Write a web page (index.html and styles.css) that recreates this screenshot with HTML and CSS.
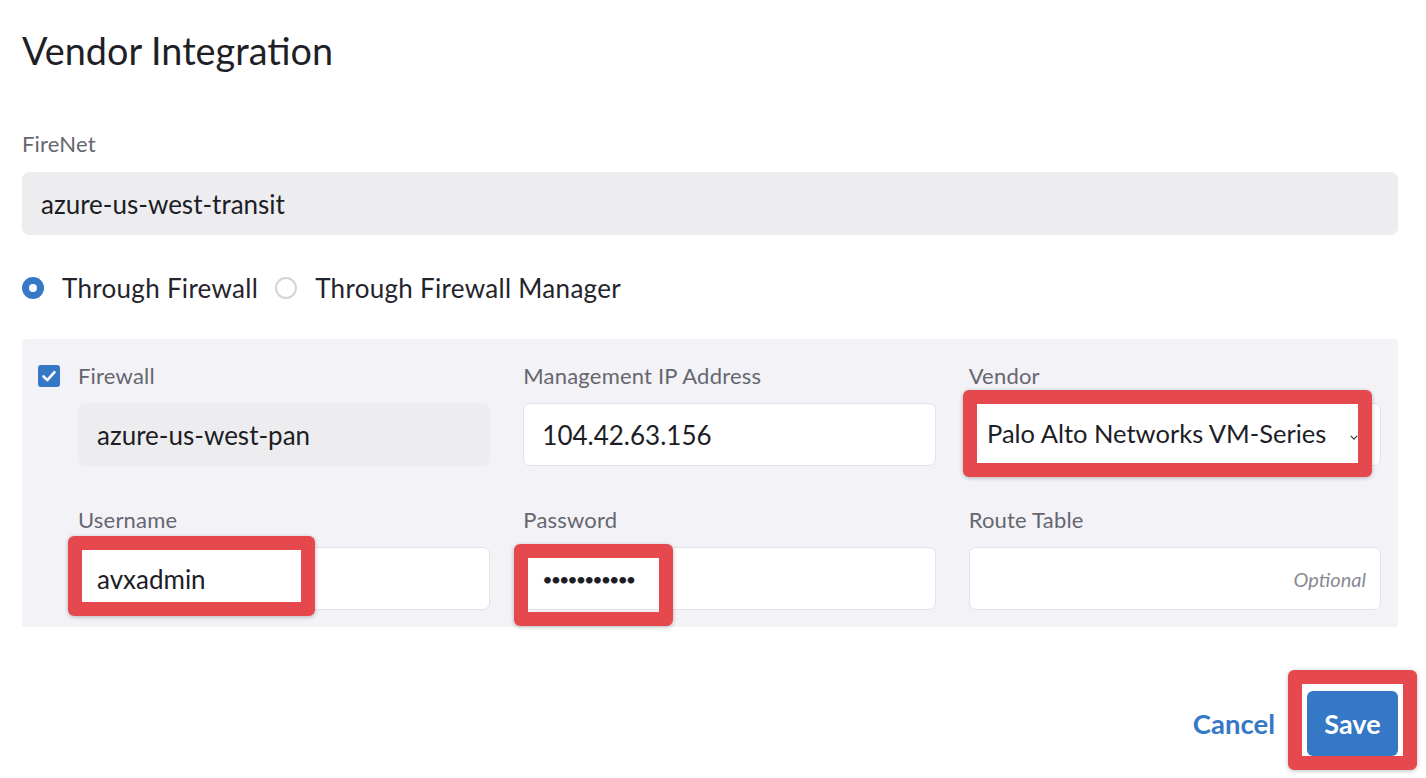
FILE: index.html
```html
<!DOCTYPE html>
<html>
<head>
<meta charset="utf-8">
<link rel="stylesheet" href="styles.css">
</head>
<body>
<div class="page">
  <h1 class="title">Vendor Integration</h1>

  <div class="field">
    <div class="label">FireNet</div>
    <div class="input disabled">azure-us-west-transit</div>
  </div>

  <div class="radios">
    <div class="radio-item"><span class="radio on"></span><span>Through Firewall</span></div>
    <div class="radio-item"><span class="radio"></span><span>Through Firewall Manager</span></div>
  </div>

  <div class="panel">
    <div class="cell">
      <div class="label check-label">
        <span class="checkbox"><svg viewBox="0 0 22 22" width="22" height="22"><path d="M5.5 11.5l3.8 3.6 7.2-8" fill="none" stroke="#fff" stroke-width="2.6" stroke-linecap="round" stroke-linejoin="round"/></svg></span>
        Firewall
      </div>
      <div class="input disabled">azure-us-west-pan</div>
    </div>
    <div class="cell">
      <div class="label">Management IP Address</div>
      <div class="input">104.42.63.156</div>
    </div>
    <div class="cell">
      <div class="label">Vendor</div>
      <div class="input select">Palo Alto Networks VM-Series<svg class="chev" viewBox="0 0 10 6" width="10" height="6"><path d="M1 1l4 4 4-4" fill="none" stroke="#333" stroke-width="1.4"/></svg></div>
    </div>
    <div class="cell">
      <div class="label">Username</div>
      <div class="input">avxadmin</div>
    </div>
    <div class="cell">
      <div class="label">Password</div>
      <div class="input pwd">•••••••••••</div>
    </div>
    <div class="cell">
      <div class="label">Route Table</div>
      <div class="input optional"><span class="ph">Optional</span></div>
    </div>
  </div>

  <div class="actions">
    <span class="cancel">Cancel</span>
    <span class="save">Save</span>
  </div>

  <div class="mark mark-vendor"><svg class="mark-chev" viewBox="0 0 10 6" width="8" height="5"><path d="M1 1l4 4 4-4" fill="none" stroke="#333" stroke-width="1.4"/></svg></div>
  <div class="mark mark-user"></div>
  <div class="mark mark-pwd"></div>
  <div class="mark mark-save"></div>
</div>
</body>
</html>
```

FILE: styles.css
```css
html, body {
  margin: 0;
  padding: 0;
  background: #fff;
}
body {
  font-family: Lato, "Noto Sans", sans-serif;
  color: #1d1d26;
}
.page {
  position: relative;
  width: 1376px;
  padding: 0 28px 0 22px;
  height: 778px;
  overflow: hidden;
}
.title {
  margin: 0;
  padding-top: 29px;
  font-size: 37.8px;
  line-height: 44px;
  font-weight: 400;
  color: #1f1f28;
  letter-spacing: 0;
}
.label {
  font-size: 22px;
  line-height: 24px;
  color: #66666f;
  letter-spacing: 0.2px;
}
.field {
  margin-top: 59px;
}
.field .label {
  margin-bottom: 16px;
}
.input {
  box-sizing: border-box;
  height: 63px;
  border-radius: 7px;
  background: #fff;
  border: 1px solid #e2e2e8;
  display: flex;
  align-items: center;
  padding: 0 18px;
  font-size: 26px;
  color: #1d1d26;
}
.input.disabled {
  background: #ededf0;
  border-color: #ededf0;
}
.radios {
  display: flex;
  align-items: center;
  gap: 17px;
  margin-top: 38px;
  height: 30px;
  font-size: 26px;
  letter-spacing: 0.3px;
  color: #24242c;
}
.radio-item {
  display: flex;
  align-items: center;
  gap: 18px;
}
.radio {
  box-sizing: border-box;
  width: 22px;
  height: 22px;
  border-radius: 50%;
  border: 2px solid #d3d3da;
  background: #fff;
  flex: none;
}
.radio.on {
  border: 7px solid #3578c6;
}
.panel {
  margin-top: 36px;
  background: #f2f2f7;
  border-radius: 4px;
  padding: 25px 17px 17px 56px;
  display: grid;
  grid-template-columns: repeat(3, 1fr);
  column-gap: 33px;
  row-gap: 42px;
}
.cell .label {
  margin-bottom: 15px;
}
.check-label {
  display: flex;
  align-items: center;
}
.checkbox {
  width: 22px;
  height: 22px;
  border-radius: 3px;
  background: #3578c6;
  margin-left: -40px;
  margin-right: 18px;
  display: flex;
}
.select {
  position: relative;
}
.chev {
  position: absolute;
  right: 20px;
  top: 30px;
}
.pwd {
  font-size: 18px;
  letter-spacing: -2.1px;
}
.optional {
  justify-content: flex-end;
  padding-right: 14px;
}
.ph {
  font-style: italic;
  font-size: 20px;
  color: #8a8a93;
}
.actions {
  display: flex;
  justify-content: flex-end;
  align-items: center;
  gap: 32px;
  margin-top: 64px;
}
.cancel {
  font-size: 27.5px;
  font-weight: 700;
  color: #3578c6;
}
.save {
  width: 91px;
  height: 65px;
  border-radius: 6px;
  background: #3578c6;
  color: #fff;
  font-size: 27px;
  font-weight: 700;
  display: flex;
  align-items: center;
  justify-content: center;
}
.mark {
  position: absolute;
  box-sizing: border-box;
  border: 14px solid #e5484d;
  border-radius: 6px;
  box-shadow: 0 1px 4px rgba(0,0,0,0.25);
}
.mark-vendor {
  left: 963px;
  top: 390px;
  width: 409px;
  height: 87px;
  background: #fff;
}
.mark-vendor::after {
  content: "Palo Alto Networks VM-Series";
  position: absolute;
  left: 10px;
  top: 14px;
  font-size: 25.5px;
  color: #1d1d26;
}
.mark-chev {
  position: absolute;
  left: 373px;
  top: 31px;
}
.mark-user {
  left: 68px;
  top: 536px;
  width: 247px;
  height: 80px;
}
.mark-pwd {
  left: 514px;
  top: 544px;
  width: 159px;
  height: 82px;
}
.mark-save {
  left: 1288px;
  top: 670px;
  width: 129px;
  height: 100px;
}
```
